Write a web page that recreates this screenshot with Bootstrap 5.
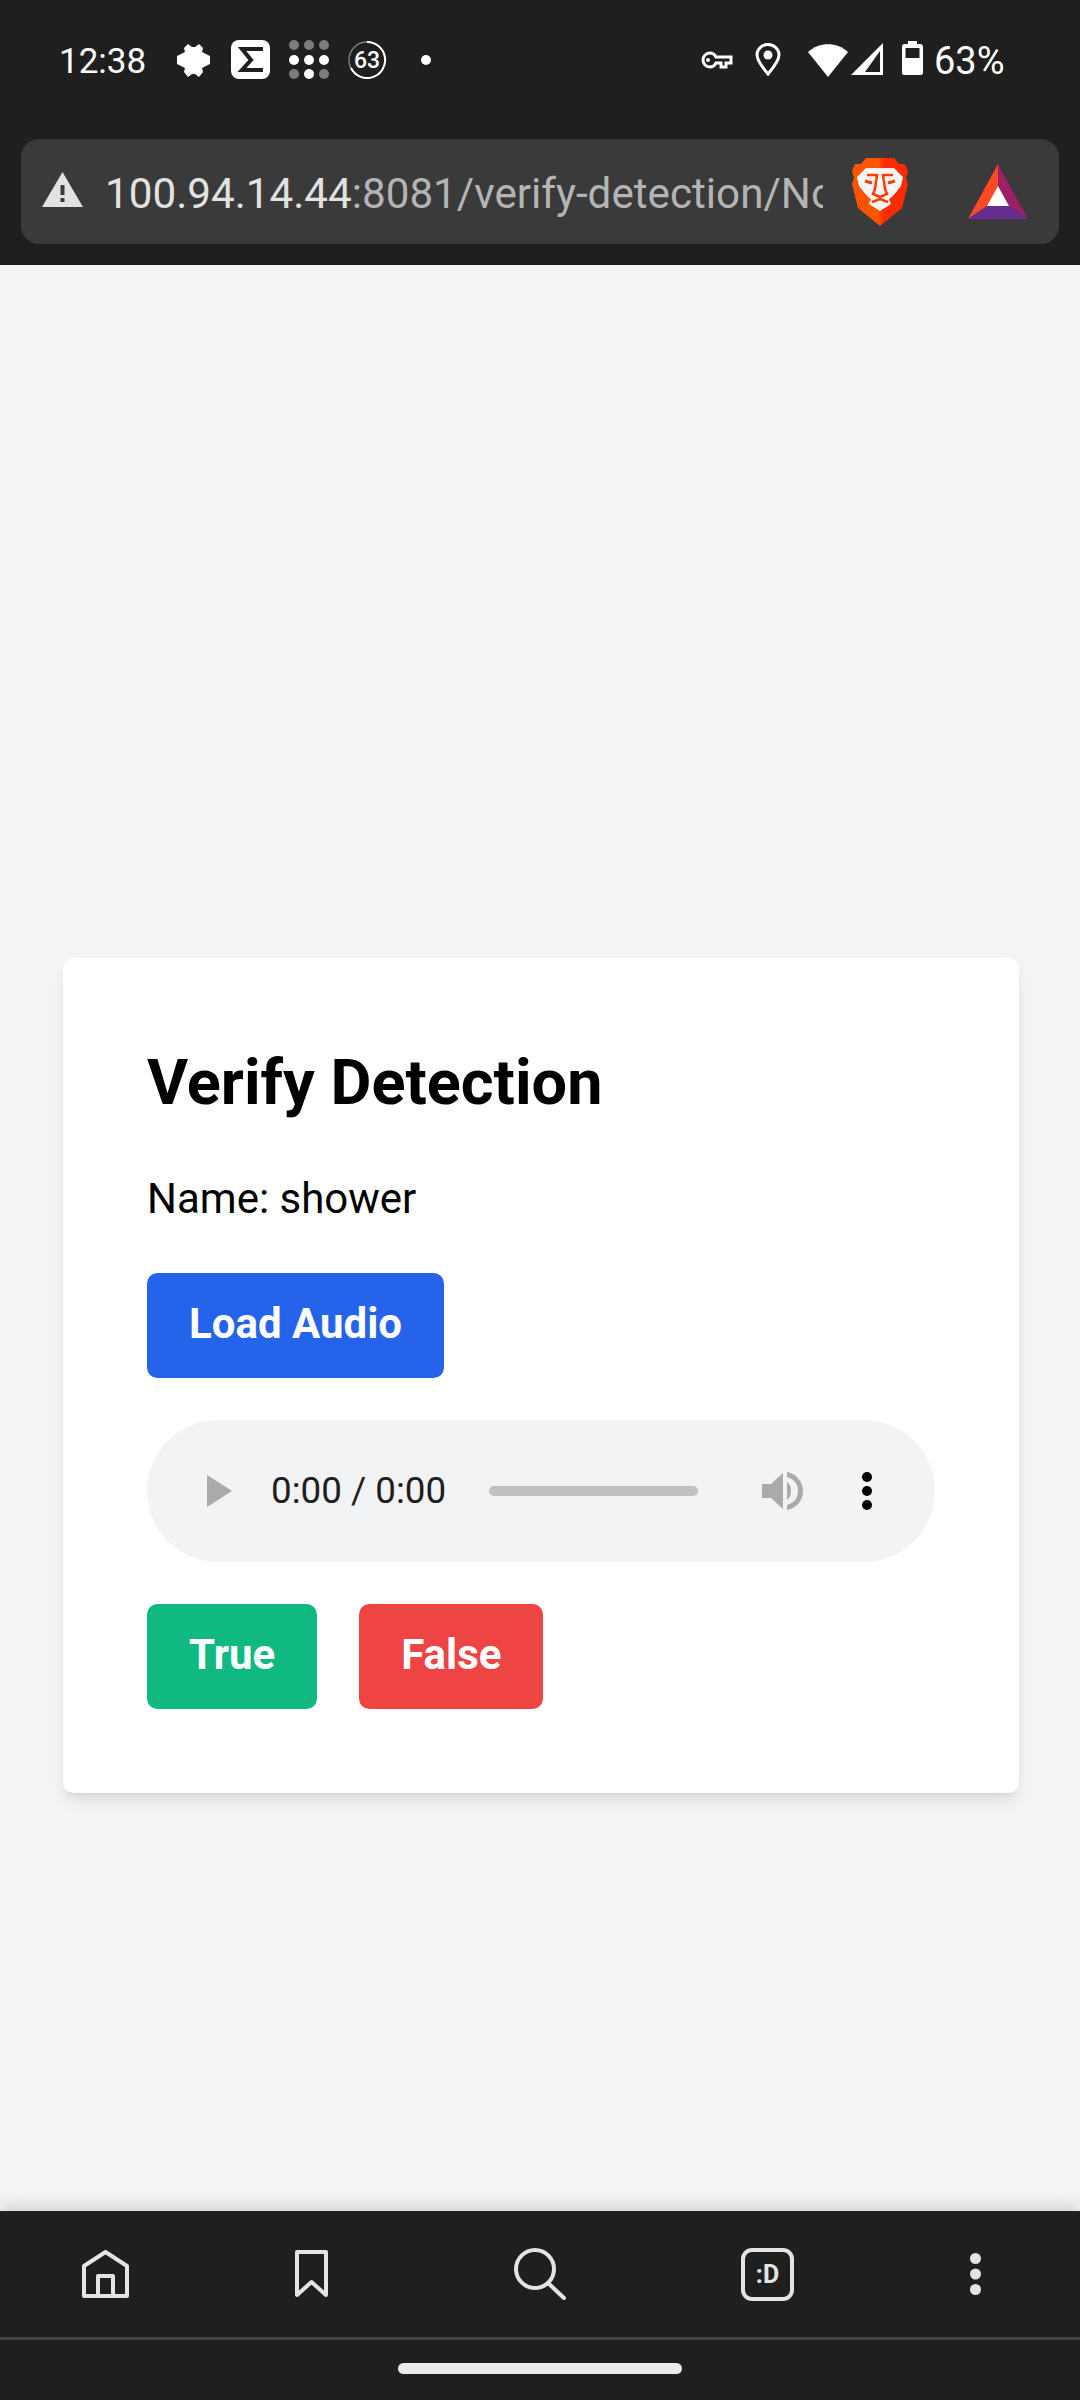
<!DOCTYPE html>
<html lang="en">
  <head>
    <meta charset="UTF-8" />
    <meta name="viewport" content="width=device-width, initial-scale=1.0" />
    <title>Verify Detection</title>
    <link
      href="https://cdn.jsdelivr.net/npm/bootstrap@5.3.0/dist/css/bootstrap.min.css"
      rel="stylesheet"
    />
    <style>
      body {
        width: 1080px;
        height: 2400px;
        overflow: hidden;
        font-family: Roboto, "Liberation Sans", sans-serif;
        background: #f3f4f6;
        color: #000;
      }
      svg {
        display: block;
        flex: none;
      }

      /* status bar + address bar */
      .top-chrome {
        height: 265px;
        background: #1f1f1f;
        padding: 0 21px;
      }
      .status-row {
        height: 139px;
        padding: 40px 53px 0 38px;
        align-items: flex-start;
        color: #fff;
        font-size: 35px;
        line-height: 43px;
      }
      .clock {
        width: 84px;
        margin-right: 34px;
      }
      .ic-puzzle {
        margin-right: 21px;
      }
      .ic-sigma {
        margin-right: 19px;
      }
      .ic-grid {
        margin-right: 18px;
      }
      .ic-dot {
        margin-left: 33px;
      }
      .ic-key {
        margin-left: auto;
        margin-right: 22px;
      }
      .ic-pin {
        margin-right: 27px;
      }
      .ic-wifi {
        margin-right: 2px;
      }
      .ic-signal {
        margin-right: 18px;
      }
      .batt-text {
        margin-left: 11px;
        width: 72px;
        font-size: 38px;
      }
      .url-bar {
        height: 105px;
        background: #3a3a3a;
        border-radius: 18px;
      }
      .url-warn {
        margin: 0 0 3px 21px;
      }
      .url-text {
        width: 718px;
        margin-left: 22px;
        padding-top: 5px;
        overflow: hidden;
        white-space: nowrap;
        font-size: 42.2px;
        color: #b4b4b4;
      }
      .url-host {
        color: #e2e2e2;
      }
      .ic-brave {
        margin-left: 29px;
      }
      .ic-bat {
        margin-left: 60px;
      }

      /* page */
      .page-area {
        height: 1946px;
        padding: 693px 61px 0 63px;
      }
      .verify-box {
        padding: 84px;
        background: #fff;
        border-radius: 10.5px;
        box-shadow: 0 10px 16px -3px rgba(0, 0, 0, 0.1),
          0 4px 6px -4px rgba(0, 0, 0, 0.1);
      }
      .verify-title {
        margin: 0 0 44px;
        font-size: 63px;
        line-height: 82px;
        font-weight: 700;
      }
      .verify-name {
        margin: 0 0 44px;
        font-size: 42px;
        line-height: 61px;
      }
      .action-btn {
        height: 105px;
        padding: 0 42px 3px;
        border: 0;
        border-radius: 10.5px;
        font-size: 42px;
        line-height: 102px;
        font-weight: 700;
        color: #fff;
      }
      .action-btn:hover {
        color: #fff;
      }
      .btn-load {
        background: #2563eb;
      }
      .btn-true {
        background: #10b981;
      }
      .btn-false {
        background: #ef4444;
      }
      .btn-gap {
        gap: 42px;
      }
      .player {
        height: 142px;
        margin: 42px 0;
        padding-left: 60px;
        background: #f1f3f4;
        border-radius: 71px;
      }
      .player-time {
        width: 175px;
        margin-left: 39px;
        font-size: 36.75px;
        color: #1e1e1e;
        white-space: nowrap;
      }
      .player-track {
        width: 209px;
        height: 10px;
        margin: 0 64px 0 43px;
        background: #bfc0c1;
        border-radius: 5px;
      }
      .player-more {
        margin-left: 57px;
      }

      /* bottom toolbar */
      .bottom-chrome {
        height: 189px;
        background: #1f1f1f;
        box-shadow: 0 -5px 16px rgba(0, 0, 0, 0.14);
      }
      .tool-row {
        height: 126px;
        padding-left: 82px;
        border-bottom: 3px solid #444;
        box-sizing: content-box;
        margin-bottom: -3px;
      }
      .tool-bookmark {
        margin-left: 166px;
      }
      .tool-search {
        margin-left: 186px;
      }
      .tool-tabs {
        margin-left: 175px;
      }
      .tool-more {
        margin-left: 176px;
      }
      .tab-face {
        font-family: Roboto, sans-serif;
        font-size: 25px;
        font-weight: 700;
      }
      .ring-num {
        font-family: Roboto, sans-serif;
        font-size: 23px;
        font-weight: 500;
      }
      .home-pill {
        width: 284px;
        height: 11px;
        margin: 26px auto 0;
        background: #ebebeb;
        border-radius: 6px;
      }
    </style>
  </head>
  <body>
    <div class="top-chrome">
      <div class="status-row d-flex">
        <span class="clock">12:38</span>
        <!-- puzzle -->
        <svg class="ic-puzzle" width="33" height="40" viewBox="0 0 33 40" fill="#fff">
          <path d="M11 4 L15 7 H18 L22 4 L26 8 L25 12 L29 14 L33 16 V24 L29 26 L25 28 L26 32 L22 37 L18 34 H15 L11 37 L7 32 L8 28 L4 26 L0 24 V16 L4 14 L8 12 L7 8 Z" />
        </svg>
        <!-- sigma box -->
        <svg class="ic-sigma" width="39" height="40" viewBox="0 0 39 40">
          <rect width="39" height="39" rx="8" fill="#fff" />
          <path d="M30 11 V9 H11 L20 20 L11 30 H30 V28" fill="none" stroke="#1f1f1f" stroke-width="4" />
        </svg>
        <!-- dots -->
        <svg class="ic-grid" width="40" height="40" viewBox="0 0 40 40">
          <g fill="#7c7c7c">
            <circle cx="5" cy="5" r="5" /><circle cx="20" cy="5" r="5" /><circle cx="35" cy="5" r="5" />
            <circle cx="5" cy="34" r="5" /><circle cx="35" cy="34" r="5" />
          </g>
          <g fill="#fff">
            <circle cx="5" cy="20" r="5" /><circle cx="20" cy="20" r="5" /><circle cx="35" cy="20" r="5" />
            <circle cx="20" cy="34" r="5" />
          </g>
        </svg>
        <!-- data saver ring -->
        <svg width="40" height="40" viewBox="0 0 40 40">
          <circle cx="20" cy="20" r="18" fill="none" stroke="#7c7c7c" stroke-width="1.5" />
          <path d="M20 2 A18 18 0 1 1 4 28" fill="none" stroke="#fff" stroke-width="2" />
          <text class="ring-num" x="20" y="28" text-anchor="middle" fill="#fff">63</text>
        </svg>
        <svg class="ic-dot" width="12" height="40" viewBox="0 0 12 40" fill="#fff">
          <circle cx="6" cy="20" r="5" />
        </svg>

        <!-- right side -->
        <svg class="ic-key" width="34" height="40" viewBox="0 0 34 40">
          <path d="M11 13 A7 7 0 1 0 11 27 C14 27 16 25 17 23 H22 V27 H27 V23 H32 V17 H17 C16 15 14 13 11 13 Z" fill="none" stroke="#fff" stroke-width="3" />
          <circle cx="9" cy="20" r="2" fill="#fff" />
        </svg>
        <svg class="ic-pin" width="26" height="40" viewBox="0 0 26 40">
          <path d="M13 4.5 C6.5 4.5 2 9.5 2 15 C2 21 8 28 13 34 C18 28 24 21 24 15 C24 9.5 19.5 4.5 13 4.5 Z" fill="none" stroke="#fff" stroke-width="3" />
          <circle cx="13" cy="15" r="4.5" fill="#fff" />
        </svg>
        <svg class="ic-wifi" width="40" height="40" viewBox="0 0 40 40">
          <path d="M0 12 C11 1.5 29 1.5 40 12 L20 37 Z" fill="#fff" />
        </svg>
        <svg class="ic-signal" width="34" height="40" viewBox="0 0 34 40">
          <path d="M1 35 L33 3 V35 Z" fill="#fff" />
          <path d="M15 32 L30 11 V32 Z" fill="#1f1f1f" />
        </svg>
        <svg width="21" height="40" viewBox="0 0 21 40">
          <path d="M6 4 V1 H15 V4 H18 Q21 4 21 7 V33 Q21 35 18 35 H3 Q0 35 0 33 V7 Q0 4 3 4 Z" fill="#fff" />
          <rect x="3.5" y="8" width="14" height="10" fill="#1f1f1f" />
        </svg>
        <span class="batt-text">63%</span>
      </div>

      <div class="url-bar d-flex align-items-center">
        <svg class="url-warn" width="41" height="36" viewBox="0 0 41 36">
          <path d="M20.5 0 L41 35 H0 Z" fill="#e2e2e2" />
          <rect x="18.5" y="13" width="4" height="10" fill="#3a3a3a" />
          <rect x="18.5" y="26" width="4" height="4" fill="#3a3a3a" />
        </svg>
        <div class="url-text"><span class="url-host">100.94.14.44</span>:8081/verify-detection/No</div>
        <!-- brave lion -->
        <svg class="ic-brave" width="56" height="68" viewBox="0 0 56 68">
          <defs>
            <linearGradient id="braveGrad" x1="0" x2="1" y1="0" y2="0">
              <stop offset="0.48" stop-color="#ff5500" />
              <stop offset="0.56" stop-color="#ff2b00" />
            </linearGradient>
          </defs>
          <path d="M14 0 H42 L47 6 H53 L56 13 L54 20 L56 26 L50 50 L28 68 L6 50 L0 26 L2 20 L0 13 L3 6 H9 Z" fill="url(#braveGrad)" />
          <path d="M14 10 H42 L51 19 L49 28 L41 38 L37 41 L39 46 L28 53 L17 46 L19 41 L15 38 L7 28 L5 19 Z" fill="#f5f5f5" />
          <path d="M15 17 H25 L23 31 L21 36 L28 39 L35 36 L33 31 L31 17 H41" fill="none" stroke="#ff3c00" stroke-width="2.5" />
          <path d="M13 23 L20 25 M43 23 L36 25" stroke="#ff3c00" stroke-width="3" />
          <path d="M20 44 L28 41 L36 44" fill="none" stroke="#ff3c00" stroke-width="2.5" />
        </svg>
        <!-- bat triangle -->
        <svg class="ic-bat" width="60" height="55" viewBox="0 0 60 55">
          <path d="M30 0 L0 55 L19 42 L30 22 Z" fill="#ff4a25" />
          <path d="M30 0 L60 55 L41 42 L30 22 Z" fill="#9e1f63" />
          <path d="M0 55 H60 L41 42 H19 Z" fill="#662d91" />
          <path d="M30 22 L41 42 H19 Z" fill="#fff" />
        </svg>
      </div>
    </div>

    <div class="page-area">
      <div class="verify-box">
        <h2 class="verify-title">Verify Detection</h2>
        <p class="verify-name">Name: shower</p>
        <button type="button" class="btn action-btn btn-load d-block">Load Audio</button>
        <div class="player d-flex align-items-center">
          <svg width="25" height="32" viewBox="0 0 25 32"><path d="M0 0 L25 16 L0 32 Z" fill="#a9aaa9" /></svg>
          <span class="player-time">0:00 / 0:00</span>
          <div class="player-track"></div>
          <svg width="42" height="40" viewBox="0 0 42 40">
            <path d="M0 13 H9 L21 2 V38 L9 27 H0 Z" fill="#a9aaa9" />
            <path d="M25 11 C28 13 29 16 29 20 C29 24 28 27 25 29 Z" fill="#a9aaa9" />
            <path d="M25 1 C35 3 41 11 41 20 C41 29 35 37 25 39 V34 C32 32 36 27 36 20 C36 13 32 8 25 6 Z" fill="#a9aaa9" />
          </svg>
          <svg class="player-more" width="12" height="38" viewBox="0 0 12 38" fill="#000">
            <circle cx="6" cy="5" r="5" /><circle cx="6" cy="19" r="5" /><circle cx="6" cy="33" r="5" />
          </svg>
        </div>
        <div class="d-flex btn-gap">
          <button type="button" class="btn action-btn btn-true">True</button>
          <button type="button" class="btn action-btn btn-false">False</button>
        </div>
      </div>
    </div>

    <div class="bottom-chrome">
      <div class="tool-row d-flex align-items-center">
        <svg width="47" height="48" viewBox="0 0 47 48" fill="none" stroke="#e4e4e4" stroke-width="4" stroke-linejoin="round">
          <path d="M2 16 L23.5 2 L45 16 V46 H2 Z" />
          <path d="M16 46 V26 H31 V46" />
        </svg>
        <svg class="tool-bookmark" width="33" height="48" viewBox="0 0 33 48" fill="none" stroke="#e4e4e4" stroke-width="4" stroke-linejoin="round">
          <path d="M2 2 H31 V45 L16.5 32 L2 45 Z" />
        </svg>
        <svg class="tool-search" width="52" height="52" viewBox="0 0 52 52" fill="none" stroke="#e4e4e4" stroke-width="4" stroke-linecap="round">
          <circle cx="21" cy="21" r="19" />
          <path d="M34 35 L50 50" />
        </svg>
        <svg class="tool-tabs" width="53" height="53" viewBox="0 0 53 53">
          <rect x="2" y="2" width="49" height="49" rx="9" fill="none" stroke="#e4e4e4" stroke-width="4" />
          <text class="tab-face" x="26.5" y="35" text-anchor="middle" fill="#e4e4e4">:D</text>
        </svg>
        <svg class="tool-more" width="11" height="42" viewBox="0 0 11 42" fill="#e4e4e4">
          <circle cx="5.5" cy="5.5" r="5.5" /><circle cx="5.5" cy="21" r="5.5" /><circle cx="5.5" cy="36.5" r="5.5" />
        </svg>
      </div>
      <div class="home-pill"></div>
    </div>

    <script src="https://cdn.jsdelivr.net/npm/bootstrap@5.3.0/dist/js/bootstrap.bundle.min.js"></script>
  </body>
</html>
